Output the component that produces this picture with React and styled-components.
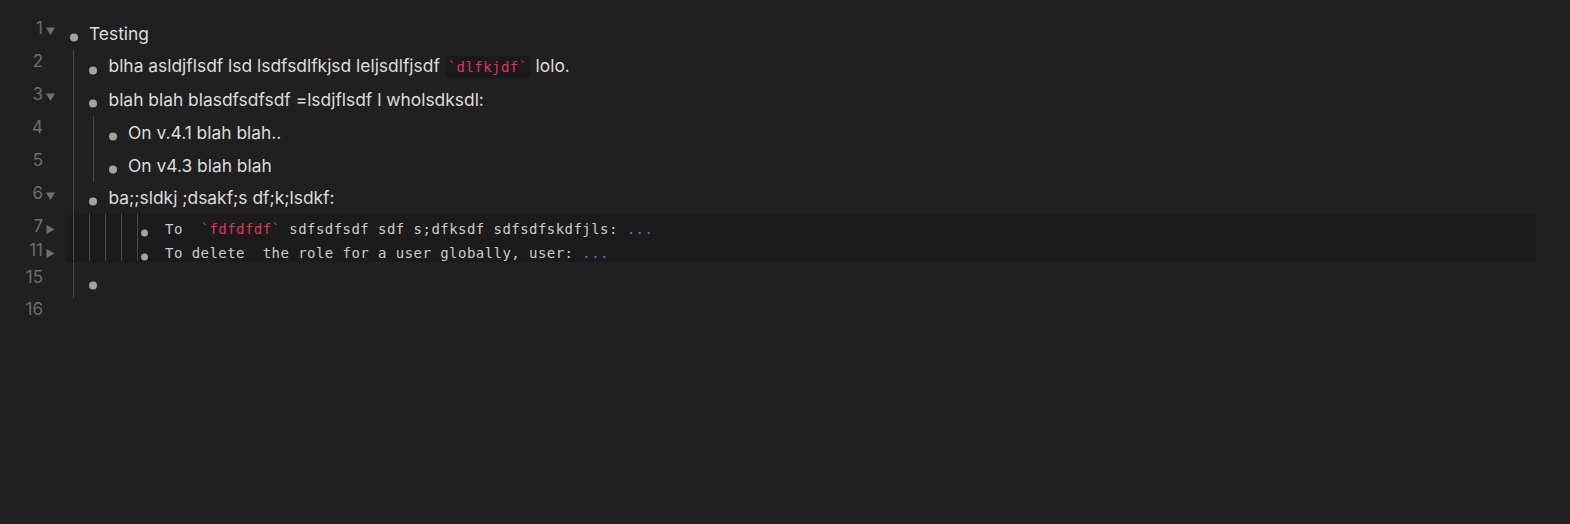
import React from 'react'
import styled, { createGlobalStyle } from 'styled-components'

const Global = createGlobalStyle`
  html, body {
    margin: 0;
    background: #202020;
  }
  body {
    font-family: Inter, "Noto Sans", sans-serif;
    color: #dadada;
  }
`

const Page = styled.div`
  min-height: 524px;
  padding-top: 17px;
  box-sizing: border-box;
`

const Row = styled.div`
  display: flex;
  height: ${(p) => p.$h}px;
`

const Gutter = styled.div`
  width: 58px;
  flex: none;
  display: flex;
  padding-top: ${(p) => p.$pt}px;
  box-sizing: border-box;
  margin-left: ${(p) => (p.$inBlock ? -65 : 0)}px;
`

const LineNo = styled.span`
  width: 43px;
  text-align: right;
  font-size: 17px;
  line-height: 18px;
  color: #6e6e6e;
`

const Fold = styled.span`
  width: 15px;
  padding-left: 3px;
  padding-top: ${(p) => p.$pt}px;
  box-sizing: border-box;
  color: #707070;
  display: flex;
  align-items: flex-start;
`

const Guide = styled.span`
  flex: none;
  box-sizing: border-box;
  width: ${(p) => p.$w - 15}px;
  margin-left: 15px;
  border-left: 1px solid #474747;
`

const Body = styled.div`
  display: flex;
  align-items: center;
  padding-top: ${(p) => p.$pt || 0}px;
  box-sizing: border-box;
  min-width: 0;
`

const BulletBox = styled.span`
  flex: none;
  width: ${(p) => p.$w}px;
  display: flex;
  justify-content: ${(p) => (p.$code ? 'flex-start' : 'center')};
  padding-left: ${(p) => (p.$code ? 2.5 : 0)}px;
  box-sizing: border-box;
`

const Dot = styled.span`
  width: ${(p) => p.$size}px;
  height: ${(p) => p.$size}px;
  border-radius: 50%;
  background: #a3a3a3;
  transform: translateY(${(p) => p.$dy}px);
`

const Text = styled.span`
  font-size: 17.4px;
  line-height: 20px;
  color: #dcdcdc;
  white-space: pre;
`

const Mono = styled.span`
  font-family: "DejaVu Sans Mono", "Liberation Mono", monospace;
  font-size: 14px;
  letter-spacing: 0.45px;
  line-height: 18px;
  color: #cdcdcd;
  white-space: pre;
`

const InlineCode = styled.code`
  font-family: "DejaVu Sans Mono", "Liberation Mono", monospace;
  font-size: 14px;
  letter-spacing: 0.45px;
  color: #e0345a;
  background: ${(p) => (p.$plain ? 'transparent' : '#1a1a1a')};
  padding: ${(p) => (p.$plain ? '0' : '3px 3px')};
  border-radius: 3px;
`

const Ellipsis = styled.span`
  color: #6a6ae8;
`

const CodeBlock = styled.div`
  margin: 0 34px 0 65px;
  background: #1b1b1b;
  border-radius: 4px;
  padding-bottom: 1px;
`

const Arrow = ({ open }) =>
  open ? (
    <svg width="9" height="9" viewBox="0 0 9 9">
      <path d="M0 0.5h9L4.5 8z" fill="currentColor" />
    </svg>
  ) : (
    <svg width="9" height="9" viewBox="0 0 9 9">
      <path d="M0.5 0v9l8-4.5z" fill="currentColor" />
    </svg>
  )

const MainRow = ({ n, fold, depth = 0, h = 33, off = 0, children, bullet = true }) => (
  <Row $h={h}>
    <Gutter $pt={1.5 + off}>
      <LineNo>{n}</LineNo>
      <Fold $pt={8}>{fold && <Arrow open={fold === 'open'} />}</Fold>
    </Gutter>
    {Array.from({ length: depth }).map((_, i) => (
      <Guide key={i} $w={19.5} />
    ))}
    {bullet && (
      <Body $pt={off}>
        <BulletBox $w={31}>
          <Dot $size={8} $dy={3.5} />
        </BulletBox>
        <Text>{children}</Text>
      </Body>
    )}
  </Row>
)

const CodeRow = ({ n, children }) => (
  <Row $h={24}>
    <Gutter $pt={4} $inBlock>
      <LineNo>{n}</LineNo>
      <Fold $pt={8}>
        <Arrow />
      </Fold>
    </Gutter>
    {Array.from({ length: 5 }).map((_, i) => (
      <Guide key={i} $w={16} />
    ))}
    <Body $pt={7}>
      <BulletBox $w={27} $code>
        <Dot $size={7.5} $dy={4.5} />
      </BulletBox>
      <Mono>{children}</Mono>
    </Body>
  </Row>
)

export default function App() {
  return (
    <Page>
      <Global />
      <MainRow n={1} fold="open">Testing</MainRow>
      <MainRow n={2} depth={1}>
        blha asldjflsdf lsd lsdfsdlfkjsd leljsdlfjsdf <InlineCode>`dlfkjdf`</InlineCode> lolo.
      </MainRow>
      <MainRow n={3} depth={1} fold="open">
        blah blah blasdfsdfsdf =lsdjflsdf l wholsdksdl:
      </MainRow>
      <MainRow n={4} depth={2}>On v.4.1 blah blah..</MainRow>
      <MainRow n={5} depth={2}>On v4.3 blah blah</MainRow>
      <MainRow n={6} depth={1} fold="open" h={31}>
        ba;;sldkj ;dsakf;s df;k;lsdkf:
      </MainRow>
      <CodeBlock>
        <CodeRow n={7}>
          {'To  '}
          <InlineCode $plain>`fdfdfdf`</InlineCode>
          {' sdfsdfsdf sdf s;dfksdf sdfsdfskdfjls: '}
          <Ellipsis>...</Ellipsis>
        </CodeRow>
        <CodeRow n={11}>
          {'To delete  the role for a user globally, user: '}
          <Ellipsis>...</Ellipsis>
        </CodeRow>
      </CodeBlock>
      <MainRow n={15} depth={1} h={36} off={4}>{''}</MainRow>
      <MainRow n={16} bullet={false} />
    </Page>
  )
}
